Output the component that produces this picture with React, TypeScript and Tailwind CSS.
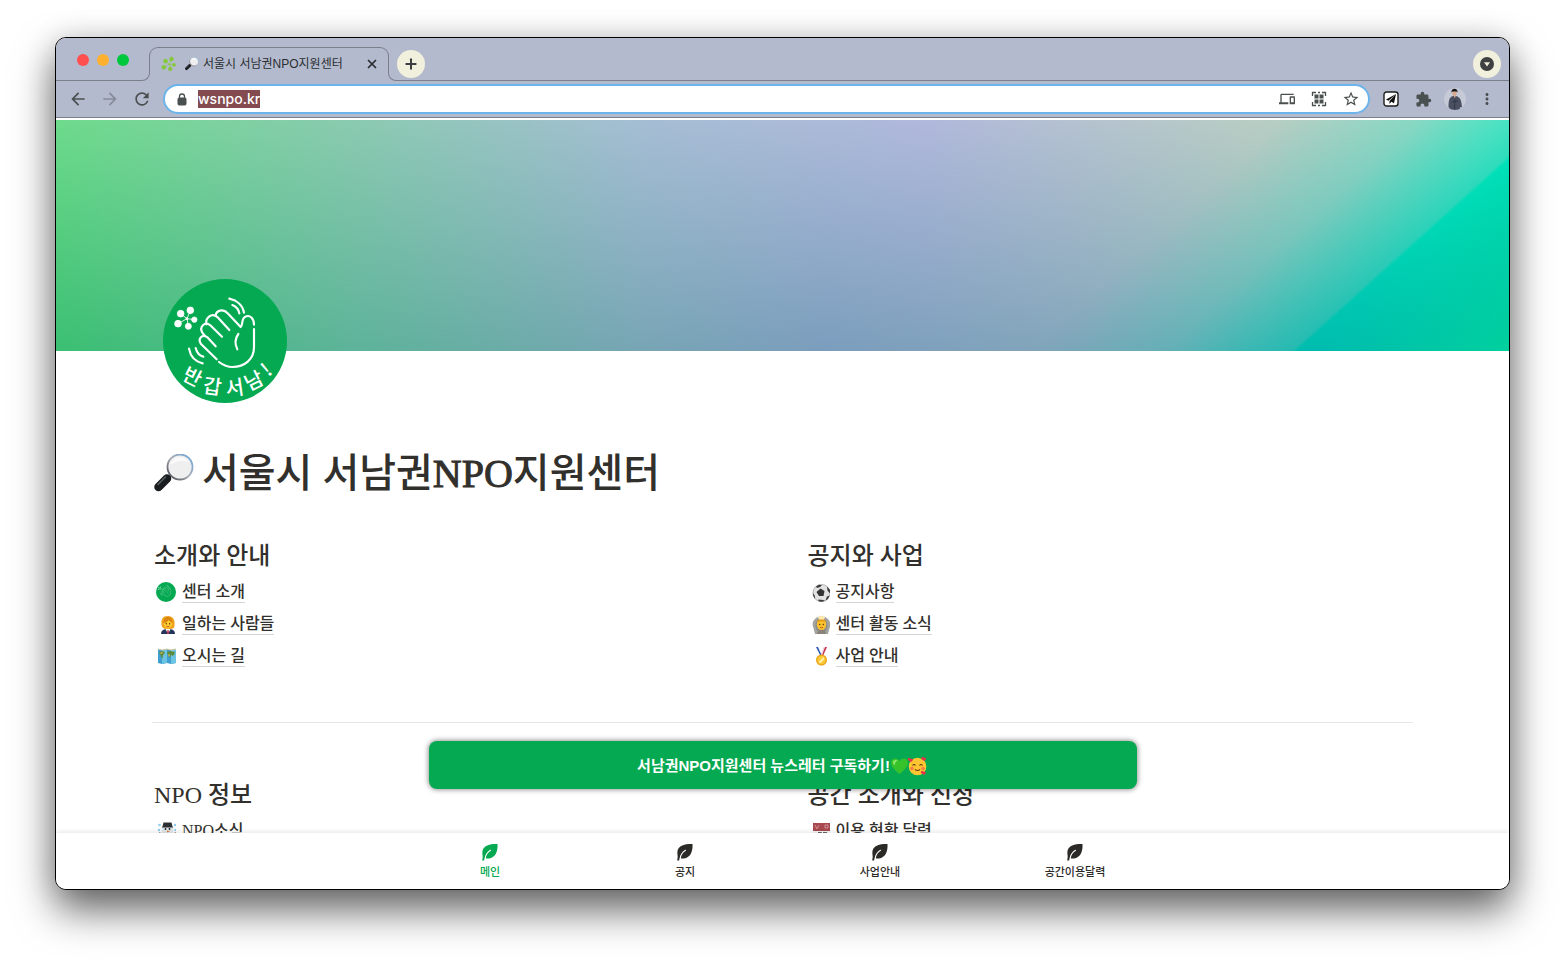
import type { ReactNode } from 'react';
import {
  MdArrowBack,
  MdArrowForward,
  MdDevices,
  MdExtension,
  MdMoreVert,
  MdRefresh,
  MdStarBorder,
} from 'react-icons/md';
import { X, Plus } from 'lucide-react';

function Magnifier({ className }: { className: string }) {
  return (
    <svg viewBox="0 0 40 40" className={className} aria-hidden="true">
      <defs>
        <linearGradient id="rim" x1="0" y1="1" x2="1" y2="0">
          <stop offset="0" stopColor="#3f4247" />
          <stop offset="0.5" stopColor="#a9adb5" />
          <stop offset="1" stopColor="#6aa5dd" />
        </linearGradient>
      </defs>
      <path d="M18 20l-5 5" stroke="#8b8f94" strokeWidth="3" />
      <path d="M13 24.500L4.500 33" stroke="#1a1d1f" strokeWidth="8.500" strokeLinecap="round" />
      <path d="M11.500 23L4 30.500" stroke="#5d6266" strokeWidth="1.500" strokeLinecap="round" />
      <circle cx="26" cy="13" r="12.500" fill="#efeff0" stroke="url(#rim)" strokeWidth="1.800" />
      <path d="M16 11c1-5 5-8 10-8 4 0 7 2 9 5-6-2-13-1-19 3z" fill="#fafafa" />
    </svg>
  );
}

function Flower({ color, className }: { color: string; className: string }) {
  return (
    <svg viewBox="70 106 78 78" className={className} aria-hidden="true">
      <FlowerShape color={color} />
    </svg>
  );
}

function FlowerShape({ color }: { color: string }) {
  return (
    <g fill={color} stroke={color} strokeWidth="2.500">
      <path d="M111 146L121 121M111 146L92 131M111 146L84 161M111 146L115 169M111 146L133 149" />
      <circle cx="121" cy="121" r="10" />
      <circle cx="92" cy="131" r="10" />
      <circle cx="84" cy="161" r="10" />
      <circle cx="115" cy="169" r="9" />
      <circle cx="133" cy="149" r="8" />
      <circle cx="111" cy="146" r="3" />
    </g>
  );
}

function HandStrokes() {
  return (
    <g fill="none" stroke="#fff" strokeWidth="6.500" strokeLinecap="round" strokeLinejoin="round">
      <path d="M200 268L153 222C142 207 157 190 172 202L197 229" />
      <path d="M165 198L157 188C147 171 164 153 181 166L216 200" />
      <path d="M170 163C164 147 184 125 203 142L238 180" />
      <path d="M197 137C198 121 220 115 233 130L272 171C280 164 273 147 286 140C300 133 312 146 312 164" />
      <path d="M312 177V232C312 268 284 291 247 291C232 291 219 285 207 276" />
      <path d="M265 192C255 206 254 222 262 238" />
      <path d="M238 86C262 91 279 107 282 128" />
      <path d="M247 105C259 110 266 118 268 130" />
      <path d="M117 236C121 258 136 275 158 280" />
      <path d="M137 234C141 249 147 257 160 260" />
    </g>
  );
}

const arcLetters = [
  { ch: '반', x: 127, y: 322, r: 27 },
  { ch: '갑', x: 187, y: 351, r: 8 },
  { ch: '서', x: 254, y: 355, r: -8 },
  { ch: '남', x: 312, y: 334, r: -26 },
  { ch: '!', x: 350, y: 300, r: -40 },
];

function CenterLogo() {
  return (
    <svg viewBox="39 27 372 372" className="size-[124px]" role="img" aria-label="반갑서남!">
      <circle cx="225" cy="213" r="186" fill="#04a951" />
      <FlowerShape color="#fff" />
      <HandStrokes />
      <g fill="#fff" fontSize="60" textAnchor="middle" className="font-['Noto_Sans_CJK_KR',sans-serif] font-medium">
        {arcLetters.map((l) => (
          <text key={l.ch} x={l.x} y={l.y + 20} transform={`rotate(${l.r} ${l.x} ${l.y})`}>
            {l.ch}
          </text>
        ))}
      </g>
    </svg>
  );
}

function Cover() {
  return (
    <svg viewBox="0 0 1453 231" preserveAspectRatio="none" className="block h-[231px] w-full shrink-0" aria-hidden="true">
      <defs>
        <linearGradient id="upper">
          <stop offset="0" stopColor="#6edb8c" />
          <stop offset="0.2" stopColor="#8acbb0" />
          <stop offset="0.4" stopColor="#a5bed4" />
          <stop offset="0.6" stopColor="#b1b9dc" />
          <stop offset="0.82" stopColor="#b9cdc4" />
          <stop offset="1" stopColor="#a0d8c4" />
        </linearGradient>
        <linearGradient id="lower">
          <stop offset="0" stopColor="#3abf72" />
          <stop offset="0.2" stopColor="#5cb398" />
          <stop offset="0.4" stopColor="#77a5b4" />
          <stop offset="0.53" stopColor="#7b9dbd" />
          <stop offset="0.7" stopColor="#82a5ba" />
          <stop offset="0.85" stopColor="#7bb5b8" />
          <stop offset="1" stopColor="#7bb5b8" />
        </linearGradient>
        <linearGradient id="fade" x2="0" y2="1">
          <stop offset="0" stopColor="#fff" stopOpacity="0" />
          <stop offset="1" stopColor="#fff" />
        </linearGradient>
        <linearGradient id="teal" x2="0" y2="1">
          <stop offset="0" stopColor="#00ecc2" />
          <stop offset="0.5" stopColor="#00d6b6" />
          <stop offset="1" stopColor="#00bcae" />
        </linearGradient>
        <linearGradient id="corner" gradientUnits="userSpaceOnUse" x1="1340" y1="140" x2="1453" y2="231">
          <stop offset="0" stopColor="#00cfa0" stopOpacity="0" />
          <stop offset="1" stopColor="#00d09e" />
        </linearGradient>
        <linearGradient id="sweep" gradientUnits="userSpaceOnUse" x1="1226" y1="5" x2="1345" y2="137">
          <stop offset="0" stopColor="#fff" stopOpacity="0" />
          <stop offset="0.5" stopColor="#fff" stopOpacity="0.200" />
          <stop offset="0.98" stopColor="#fff" stopOpacity="0.700" />
          <stop offset="1" stopColor="#fff" />
        </linearGradient>
        <mask id="down">
          <rect width="1453" height="231" fill="url(#fade)" />
        </mask>
        <mask id="diagonal">
          <rect width="1453" height="231" fill="url(#sweep)" />
        </mask>
      </defs>
      <rect width="1453" height="231" fill="url(#upper)" />
      <rect width="1453" height="231" fill="url(#lower)" mask="url(#down)" />
      <g mask="url(#diagonal)">
        <rect width="1453" height="231" fill="url(#teal)" />
        <rect x="1240" width="213" height="231" fill="url(#corner)" />
      </g>
    </svg>
  );
}

function Glyph({ children }: { children: ReactNode }) {
  return (
    <svg viewBox="0 0 20 20" className="size-5" aria-hidden="true">
      {children}
    </svg>
  );
}

const glyphs = {
  center: (
    <svg viewBox="39 27 372 372" className="size-5" aria-hidden="true">
      <circle cx="225" cy="213" r="186" fill="#04a951" />
      <g opacity="0.600">
        <HandStrokes />
        <FlowerShape color="#fff" />
      </g>
    </svg>
  ),
  worker: (
    <Glyph>
      <path d="M6 13C4 5 7 2 12 2s8 4 6 12l-3 1H9z" fill="#f0a21d" />
      <path d="M5 20c0-4 3-5 7-5s7 1 7 5z" fill="#23345c" />
      <path d="M9.500 15h5L12 20z" fill="#fff" />
      <path d="M11.500 16h1l.5 3-1 1-1-1z" fill="#b23" />
      <ellipse cx="12" cy="9.500" rx="4.200" ry="5" fill="#fdc92f" />
      <path d="M7.500 9c0-4 2-6 4-6 3 0 5 2 5 6-2-1-3-2-4-3-1 2-3 3-5 3z" fill="#d98512" />
      <circle cx="10.300" cy="9.800" r=".7" fill="#5b3410" />
      <circle cx="13.700" cy="9.800" r=".7" fill="#5b3410" />
      <path d="M10.500 12.300q1.500 1 3 0" stroke="#b5441c" strokeWidth=".8" fill="none" />
    </Glyph>
  ),
  map: (
    <Glyph>
      <path d="M2 3l4 1 5-1 4 1 5-1v14l-5 1-4-1-5 1-4-1z" fill="#3f9fd0" />
      <path d="M6 4l5-1v14l-5 1zM15 4l5-1v14l-5 1z" fill="#6cc3e2" />
      <path d="M3 6l4-1 2 2-2 2-.5 4-1.500-3zM11 6l3-1 5 1-1 3-2 1-1-2-1 4-2-3z" fill="#5f8a3a" />
      <path d="M4 7l2-1 1 1-2 1zM12 8l2 1-1 2z" fill="#d8bd55" />
      <path d="M2 3l4 1 5-1 4 1 5-1" stroke="#d9caa0" strokeWidth="1" fill="none" />
    </Glyph>
  ),
  ball: (
    <Glyph>
      <circle cx="11.500" cy="11" r="8.600" fill="#e2e2e2" stroke="#8a8a8a" strokeWidth=".6" />
      <path d="M10.500 6.500l4 2.500-1 5H9L6.500 10z" fill="#333" />
      <path d="M6 4.500L9 2.700l3 .5-2 1.800-3 1zM17 4.500l3 3.500v3.500l-2.500-3zM3 11l1.700 2.500.5 3.500L3.300 14zM8.500 17.500l4.500.5 2 1-3.500.8-3-.6zM17 14.500l2.500-1-1.500 3.500-2.500 1.500z" fill="#3a3a3a" />
    </Glyph>
  ),
  okay: (
    <Glyph>
      <path d="M11.500 2C4 3 1 9 3.500 14L5 20h13l1.500-6C22 9 19 3 11.500 2z" fill="#a3a3a0" />
      <path d="M11.500 4C7 5 4.500 9 6 14l1 3h9l1-3c1.500-5-1-9-5.500-10z" fill="#8b8d8c" />
      <path d="M7 20c0-3 2-4 4.500-4s4.500 1 4.500 4z" fill="#8a8278" />
      <ellipse cx="11.500" cy="10.500" rx="4.700" ry="5.500" fill="#fcc22d" />
      <path d="M7 8c1-4 8-4 9 0-3-1-6-1-9 0z" fill="#e59a14" />
      <path d="M8 3.500c1-2.500 6-2.500 7 0l-1 2H9z" fill="#ffe9b0" />
      <circle cx="9.700" cy="10.500" r=".7" fill="#5b3410" />
      <circle cx="13.300" cy="10.500" r=".7" fill="#5b3410" />
      <path d="M10 13.300q1.500 1 3 0" stroke="#a44a18" strokeWidth=".8" fill="none" />
    </Glyph>
  ),
  medal: (
    <Glyph>
      <path d="M6 1h3l4 8-2 2z" fill="#2f58b8" />
      <path d="M8 1h2l3 7-1 2z" fill="#fff" />
      <path d="M17 1h-3l-3 8 2 1z" fill="#c9354a" />
      <path d="M15 1h-1l-3 8h1z" fill="#f3f3ff" />
      <circle cx="11.500" cy="14" r="5.500" fill="#e9a514" />
      <circle cx="11.500" cy="14" r="4.200" fill="#f9c93a" />
      <path d="M8.500 16l5-5 1 2-4 4z" fill="#fff0a8" />
    </Glyph>
  ),
  snowman: (
    <Glyph>
      <circle cx="11.500" cy="9" r="6" fill="#dfe6ea" />
      <path d="M6.500 5.500l1-4h8l1 4 1 1h-12z" fill="#2c3035" />
      <circle cx="9.500" cy="8" r=".9" fill="#222" />
      <circle cx="13.500" cy="8" r=".9" fill="#222" />
      <path d="M11 9.500l3 1-3 .7z" fill="#e8772e" />
      <path d="M6 13l4 1.500h4l3-1.500v7H6z" fill="#c4473e" />
      <path d="M3 12l3 1M20 12l-3 1" stroke="#8a5a3c" strokeWidth="1.500" />
      <circle cx="3.500" cy="4" r="1.300" fill="#8ecdf0" />
      <circle cx="19" cy="4" r="1.300" fill="#8ecdf0" />
      <circle cx="3" cy="9" r="1.300" fill="#8ecdf0" />
      <circle cx="19.500" cy="9" r="1.300" fill="#8ecdf0" />
    </Glyph>
  ),
  calendar: (
    <Glyph>
      <rect x="3" y="2" width="17" height="17" fill="#f4f4f4" />
      <rect x="3" y="2" width="17" height="8" fill="#a9494f" />
      <path d="M5 4l2 4 2-4M15 4h3v3h-3z" stroke="#cf9294" fill="none" />
      <path d="M8 12h3v6M13 12h3l-2 6" stroke="#333" strokeWidth="1.500" fill="none" />
    </Glyph>
  ),
};

type Item = { icon: keyof typeof glyphs; label: string };
type Section = { title: string; items: Item[] };

const topSections: Section[] = [
  {
    title: '소개와 안내',
    items: [
      { icon: 'center', label: '센터 소개' },
      { icon: 'worker', label: '일하는 사람들' },
      { icon: 'map', label: '오시는 길' },
    ],
  },
  {
    title: '공지와 사업',
    items: [
      { icon: 'ball', label: '공지사항' },
      { icon: 'okay', label: '센터 활동 소식' },
      { icon: 'medal', label: '사업 안내' },
    ],
  },
];

const lowerSections: Section[] = [
  { title: 'NPO 정보', items: [{ icon: 'snowman', label: 'NPO소식' }] },
  { title: '공간 소개와 신청', items: [{ icon: 'calendar', label: '이용 현황 달력' }] },
];

function SectionGrid({ sections }: { sections: Section[] }) {
  return (
    <div className="grid grid-cols-2 gap-[46px]">
      {sections.map((s) => (
        <section key={s.title}>
          <h2 className="px-0.5 text-2xl leading-10 font-medium">{s.title}</h2>
          <ul>
            {s.items.map((item) => (
              <li key={item.label} className="flex h-8 items-center gap-1.5 pl-1">
                {glyphs[item.icon]}
                <a href="#" className="border-b border-[#d5d5d3] text-base leading-5 font-medium">
                  {item.label}
                </a>
              </li>
            ))}
          </ul>
        </section>
      ))}
    </div>
  );
}

function IconButton({ label, children }: { label: string; children: ReactNode }) {
  return (
    <button type="button" aria-label={label} className="flex size-8 shrink-0 items-center justify-center">
      {children}
    </button>
  );
}

function TabStrip() {
  return (
    <div className="flex h-[43px] shrink-0 bg-[#b4bacd]">
      <div className="flex w-[85px] items-start gap-2 border-b border-[#7b7f8c] pt-4 pl-[21px]">
        <button type="button" aria-label="닫기" className="size-3 rounded-full bg-[#ff4f4f]" />
        <button type="button" aria-label="최소화" className="size-3 rounded-full bg-[#ffb02e]" />
        <button type="button" aria-label="최대화" className="size-3 rounded-full bg-[#00c83c]" />
      </div>
      <div className="h-2 w-[9px] self-end rounded-br-lg border-r border-b border-[#7b7f8c]" />
      <div className="mt-[9px] -ml-px h-[26px] w-[240px] rounded-t-[9px] border border-b-0 border-[#7b7f8c]">
        <div className="flex h-8 items-center pr-2 pl-[11px] text-[#2b2f33]">
          <Flower color="#86c83c" className="size-4 shrink-0" />
          <Magnifier className="mr-1 ml-2 size-3.5 shrink-0" />
          <span className="flex-1 text-xs whitespace-nowrap">서울시 서남권NPO지원센터</span>
          <button type="button" aria-label="탭 닫기" className="flex size-4 items-center justify-center">
            <X size={14} strokeWidth={3} />
          </button>
        </div>
      </div>
      <div className="-ml-px h-2 w-[9px] self-end rounded-bl-lg border-b border-l border-[#7b7f8c]" />
      <div className="flex flex-1 items-start justify-between border-b border-[#7b7f8c] pt-3 pr-2">
        <button type="button" aria-label="새 탭" className="flex size-7 items-center justify-center rounded-full bg-[#f0f0dc]">
          <Plus size={16} strokeWidth={3} color="#3c3f42" />
        </button>
        <button type="button" aria-label="탭 검색" className="flex size-7 items-center justify-center rounded-full bg-[#f0f0dc]">
          <svg viewBox="0 0 14 14" className="size-3.5" aria-hidden="true">
            <circle cx="7" cy="7" r="7" fill="#3f4042" />
            <path d="M4 5.200h6L7 9.500z" fill="#f0f0dc" />
          </svg>
        </button>
      </div>
    </div>
  );
}

function Toolbar() {
  return (
    <div className="flex h-[37px] shrink-0 items-center border-b border-[#7b7f8c] bg-[#b4bacd] px-1.5 text-[#4a504f]">
      <IconButton label="뒤로">
        <MdArrowBack size={20} />
      </IconButton>
      <IconButton label="앞으로">
        <MdArrowForward size={20} color="#868b98" />
      </IconButton>
      <IconButton label="새로고침">
        <MdRefresh size={20} />
      </IconButton>
      <div className="mx-[5px] flex h-[30px] flex-1 items-center rounded-full border-2 border-[#6cb4ec] bg-white pr-px pl-3">
        <svg viewBox="0 0 10 13" className="h-[13px] w-2.5" aria-hidden="true">
          <rect x="1" y="5" width="8" height="7" rx="1" fill="currentColor" stroke="currentColor" />
          <path d="M2.500 5V3.500a2.500 2.500 0 015 0V5" fill="none" stroke="currentColor" strokeWidth="1.300" />
        </svg>
        <input
          aria-label="주소"
          defaultValue="wsnpo.kr"
          className="ml-[11px] h-[18px] w-[62px] bg-[#834b50] font-['Inter',sans-serif] text-sm font-medium text-white outline-none"
        />
        <div className="flex-1" />
        <IconButton label="기기로 보내기">
          <MdDevices size={16} />
        </IconButton>
        <IconButton label="QR 코드">
          <svg viewBox="0 0 16 16" className="size-4" fill="none" stroke="currentColor" strokeWidth="1.300" aria-hidden="true">
            <path d="M1.500 5V1.500H5M11 1.500h3.500V5M14.500 11v3.500H11M5 14.500H1.500V11M7 1.500h2M7 14.500h2" />
            <path d="M3.500 3.500h4v4h-4zM8.500 3.500h4v4h-4zM3.500 8.500h4v4h-4zM8.500 8.500h4v4h-4z" fill="currentColor" stroke="none" />
          </svg>
        </IconButton>
        <IconButton label="북마크">
          <MdStarBorder size={18} />
        </IconButton>
      </div>
      <IconButton label="보내기 확장 프로그램">
        <svg viewBox="0 0 16 16" className="size-4" aria-hidden="true">
          <rect x="1" y="1" width="14" height="14" rx="2.500" fill="#fff" stroke="#1c1c1c" strokeWidth="1.400" />
          <path d="M13 3L3 8.500l2.500 1.200zM13 3L6.500 10v3l1.800-2.200 2.700 1.400z" fill="#111" />
        </svg>
      </IconButton>
      <IconButton label="확장 프로그램">
        <MdExtension size={17} />
      </IconButton>
      <IconButton label="프로필">
        <svg viewBox="0 0 22 22" className="size-[22px]" aria-hidden="true">
          <defs>
            <clipPath id="avatar">
              <circle cx="11" cy="11" r="11" />
            </clipPath>
          </defs>
          <g clipPath="url(#avatar)">
            <rect width="22" height="22" fill="#c6c9d6" />
            <path d="M4.500 19c0-7 1-10 4.500-11h3c4 1 5.500 4 6 11l-2 .5-.5 2.500h-9z" fill="#4a5062" />
            <path d="M9.500 7h2v2l-1 1z" fill="#d9a98d" />
            <ellipse cx="10.500" cy="4.800" rx="2.200" ry="3" fill="#d9a98d" />
            <path d="M7.500 4.500c-.8-5 6.800-5 6 0l-.8-1H8.500z" fill="#17181c" />
            <path d="M8 14l6-1M11 11l-.5 10" stroke="#2d3240" strokeWidth=".8" />
          </g>
        </svg>
      </IconButton>
      <IconButton label="메뉴">
        <MdMoreVert size={18} />
      </IconButton>
    </div>
  );
}

const navItems = ['메인', '공지', '사업안내', '공간이용달력'];

export default function App() {
  return (
    <div className="flex h-screen flex-col bg-white px-[55px] pt-[37px] pb-[73px] font-['Liberation_Sans','Noto_Sans_CJK_KR',sans-serif]">
      <div className="flex min-h-0 flex-1 flex-col overflow-hidden rounded-[11px] border border-black bg-white shadow-[0_20px_40px_rgba(0,0,0,0.6),0_0_30px_rgba(0,0,0,0.12)]">
        <TabStrip />
        <Toolbar />
        <div className="relative flex min-h-0 flex-1 flex-col overflow-hidden pt-0.5">
          <Cover />
          <main className="relative shrink-0 px-24 font-['Liberation_Serif','Noto_Sans_CJK_KR',serif] text-[#32302c]">
            <div className="-mt-[72px] pl-[11px]">
              <CenterLogo />
            </div>
            <h1 className="mt-[41px] flex items-center gap-2 px-0.5 text-[40px] leading-[60px] font-medium">
              <Magnifier className="size-10 shrink-0" />
              <span>
                서울시 서남권<span className="[-webkit-text-stroke:1px]">NPO</span>지원센터
              </span>
            </h1>
            <div className="pt-8 pb-[50px]">
              <SectionGrid sections={topSections} />
            </div>
            <hr className="border-[#e6e6e4]" />
            <div className="pt-[52px]">
              <SectionGrid sections={lowerSections} />
            </div>
          </main>
          <div className="absolute inset-x-0 bottom-11 flex justify-center">
            <button
              type="button"
              className="flex h-12 w-[708px] items-center justify-center rounded-lg bg-[#04a951] pt-0.5 text-[15px] font-bold text-white shadow-[0_0_5px_1px_rgba(0,0,0,0.4)]"
            >
              서남권NPO지원센터 뉴스레터 구독하기!
              <svg viewBox="0 0 38 20" className="h-5 w-[38px]" aria-hidden="true">
                <path d="M9.500 18C3 13 1 10 1 6.500 1 2 7 1 9.500 5 12 1 18 2 18 6.500c0 3.500-2 6.500-8.500 11.500z" fill="#35c22b" />
                <path d="M3 6c0-2 3-3 5-1-2 0-3 1-3 4-1 0-2-1-2-3z" fill="#8be86a" />
                <circle cx="27.500" cy="10.500" r="8.800" fill="#fcc531" />
                <path d="M22.500 9.500q1.500-2 3 0M29.500 9.500q1.500-2 3 0M25 13.500q2.500 2 5 0" stroke="#6b3a10" strokeWidth="1.200" fill="none" />
                <circle cx="22" cy="12.500" r="1.800" fill="#f6814a" />
                <circle cx="33" cy="12.500" r="1.800" fill="#f6814a" />
                <path d="M21 6l-3-2c-1-2 2-3 3-1 2-1 3 1 0 3zM34 5l-2.500-2c-1-2 2-3 2.500-1 2-1 3.500 1 0 3zM34 19l-3-2c-1-2 2-3 3-1 2-1 3 1 0 3z" fill="#e8304a" />
              </svg>
            </button>
          </div>
        </div>
        <nav className="relative flex h-14 shrink-0 justify-center bg-white shadow-[0_-2px_4px_rgba(0,0,0,0.08)]">
          {navItems.map((label, i) => (
            <a
              key={label}
              href="#"
              className={`flex w-[195px] flex-col items-center gap-px pt-2.5 text-[11px] font-medium ${i === 0 ? 'text-[#04a951]' : 'text-[#2b2a27]'}`}
            >
              <svg viewBox="0 0 18 18" className="size-[18px]" aria-hidden="true">
                <path
                  d="M16.500 1C9 .8 3 2.500 1.600 7.500 1 10 1.700 12 1.700 14L1.200 17.500h1.900l.6-2.800C5 15.400 6.500 15.700 8 15.500 14.500 14.500 17 8.500 16.500 1z"
                  fill="currentColor"
                />
                <path d="M4.300 15.200C4.600 12 6 9.500 9.500 7.300" stroke="#fff" strokeWidth="1.100" fill="none" strokeLinecap="round" />
              </svg>
              <span className="leading-5">{label}</span>
            </a>
          ))}
        </nav>
      </div>
    </div>
  );
}
